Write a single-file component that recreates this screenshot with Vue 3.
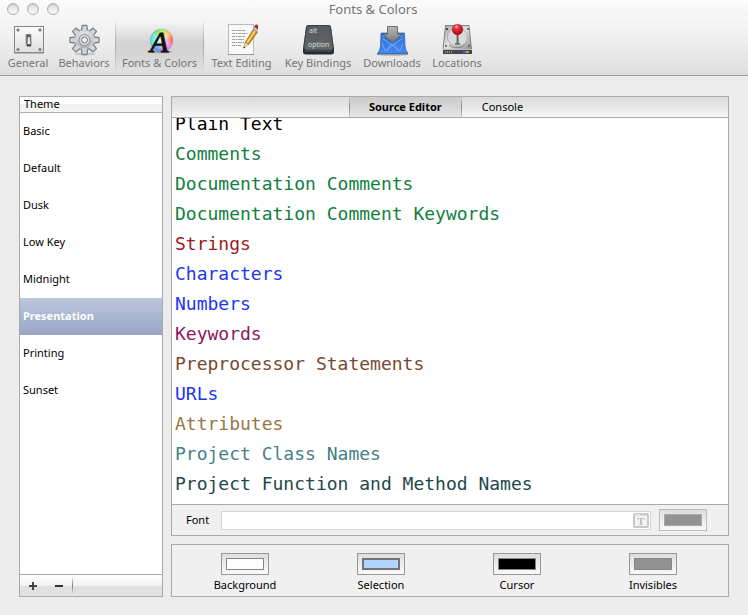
<script setup>
import { ref } from 'vue'

const sections = ['General', 'Behaviors', 'Fonts & Colors', 'Text Editing', 'Key Bindings', 'Downloads', 'Locations']
const activeSection = ref('Fonts & Colors')

const themes = ['Basic', 'Default', 'Dusk', 'Low Key', 'Midnight', 'Presentation', 'Printing', 'Sunset']
const activeTheme = ref('Presentation')

const tabs = ['Source Editor', 'Console']
const activeTab = ref('Source Editor')

const syntax = [
  { name: 'Plain Text', color: '#000000' },
  { name: 'Comments', color: '#11803d' },
  { name: 'Documentation Comments', color: '#11803d' },
  { name: 'Documentation Comment Keywords', color: '#11803d' },
  { name: 'Strings', color: '#9c1a1c' },
  { name: 'Characters', color: '#1b35f5' },
  { name: 'Numbers', color: '#1b35f5' },
  { name: 'Keywords', color: '#8f1660' },
  { name: 'Preprocessor Statements', color: '#78492e' },
  { name: 'URLs', color: '#1b35f5' },
  { name: 'Attributes', color: '#957843' },
  { name: 'Project Class Names', color: '#458186' },
  { name: 'Project Function and Method Names', color: '#22474a' },
]

const fontName = ref('')
const fontColor = ref('#929292')
const wells = ref([
  { name: 'Background', value: '#ffffff' },
  { name: 'Selection', value: '#b2d3ff' },
  { name: 'Cursor', value: '#000000' },
  { name: 'Invisibles', value: '#929292' },
])
const teeth = [0, 45, 90, 135, 180, 225, 270, 315]
</script>

<template>
  <div class="window">
    <header class="chrome">
      <div class="titlebar">
        <div class="lights">
          <button class="light" aria-label="Close"></button>
          <button class="light" aria-label="Minimize"></button>
          <button class="light" aria-label="Zoom"></button>
        </div>
        <h1 class="title">Fonts &amp; Colors</h1>
      </div>
      <nav class="toolbar">
        <button
          v-for="s in sections"
          :key="s"
          class="tool"
          :class="{ active: s === activeSection }"
          @click="activeSection = s"
        >
          <svg v-if="s === 'General'" class="icon" viewBox="0 0 32 32">
            <defs>
              <linearGradient id="plate" x1="0" y1="0" x2="0" y2="1">
                <stop offset="0" stop-color="#fbfbf9" /><stop offset="1" stop-color="#dfe0de" />
              </linearGradient>
            </defs>
            <rect x="2" y="3" width="30" height="27" fill="#777" opacity=".4" />
            <rect x="2.500" y="2.500" width="29" height="26" fill="url(#plate)" stroke="#858585" />
            <g fill="#8b8b8b" stroke="#666" stroke-width=".5">
              <circle cx="6" cy="6" r="1.300" /><circle cx="28" cy="6" r="1.300" />
              <circle cx="6" cy="25.500" r="1.300" /><circle cx="28" cy="25.500" r="1.300" />
            </g>
            <rect x="13.500" y="10" width="6" height="12" fill="#aaa" />
            <path d="M14.500 10.500h4v9h-4z" fill="#555" />
            <path d="M15.500 12.500h2.500l1 8h-4z" fill="#e9e9e9" stroke="#555" stroke-width=".7" />
            <path d="M15 20.500h4v2h-4z" fill="#4b4b4b" />
          </svg>

          <svg v-else-if="s === 'Behaviors'" class="icon" viewBox="0 0 32 32">
            <defs>
              <linearGradient id="gear" x1="0" y1="0" x2="0" y2="1">
                <stop offset="0" stop-color="#e6e8ec" /><stop offset="1" stop-color="#a5a9ae" />
              </linearGradient>
            </defs>
            <ellipse cx="17" cy="30" rx="11" ry="1.500" fill="#000" opacity=".14" />
            <g stroke="#7c8086" stroke-width="1.400" stroke-linejoin="round" fill="#c9ccd1">
              <path v-for="t in teeth" :key="t" d="M13.400 7L14.200 1.500h4.600L19.600 7z" :transform="`rotate(${t} 16.500 16)`" />
            </g>
            <circle cx="16.500" cy="16" r="10.300" fill="url(#gear)" stroke="#898d92" stroke-width=".7" />
            <g fill="#d0d3d7">
              <path v-for="t in teeth" :key="t" d="M14.200 8L14.800 2.200h3.400L18.800 8z" :transform="`rotate(${t} 16.500 16)`" />
            </g>
            <circle cx="16.500" cy="16" r="5.500" fill="#d9dcdf" stroke="#8b8f94" />
            <circle cx="16.500" cy="16" r="3" fill="#eff0f1" stroke="#777b80" />
          </svg>

          <svg v-else-if="s === 'Fonts & Colors'" class="icon" viewBox="0 0 32 32">
            <defs>
              <radialGradient id="wheelCenter">
                <stop offset="0" stop-color="#fff" stop-opacity=".9" /><stop offset="1" stop-color="#fff" stop-opacity="0" />
              </radialGradient>
              <clipPath id="disc"><circle cx="17.500" cy="16.500" r="11.500" /></clipPath>
              <filter id="soften"><feGaussianBlur stdDeviation="1.600" /></filter>
            </defs>
            <ellipse cx="17" cy="28" rx="11" ry="1.300" fill="#000" opacity=".25" />
            <g clip-path="url(#disc)">
              <g filter="url(#soften)">
                <path d="M17.500 17L4 4H17z" fill="#5fe68b" />
                <path d="M17.500 17L14 2h12z" fill="#b8ec66" />
                <path d="M17.500 17L25 2l8 10z" fill="#ffc070" />
                <path d="M17.500 17L32 9v13z" fill="#ff7678" />
                <path d="M17.500 17L32 20l-8 12z" fill="#f783d3" />
                <path d="M17.500 17L27 32H12z" fill="#c07fea" />
                <path d="M17.500 17L16 32 3 25z" fill="#6494f0" />
                <path d="M17.500 17L2 26V4z" fill="#5fe2df" />
              </g>
              <circle cx="17.500" cy="16.500" r="10" fill="url(#wheelCenter)" />
            </g>
            <circle cx="17.500" cy="16.500" r="11.300" fill="none" stroke="#777" stroke-width=".5" opacity=".6" />
            <text x="6" y="28" class="letter-a">A</text>
          </svg>

          <svg v-else-if="s === 'Text Editing'" class="icon" viewBox="0 0 32 32">
            <rect x="2.500" y=".5" width="25" height="30" fill="#f9f9f9" stroke="#bbb" />
            <path d="M2 30.500h26" stroke="#999" />
            <g stroke="#888" stroke-width=".8" stroke-dasharray="3 .6 1.500 .6 4 .6">
              <path d="M6 6.500h14M6 9.500h16M6 12.500h13M6 15.500h12M6 18.500h12M6 21.500h9" />
            </g>
            <path d="M17.500 24l2-6 8-13 4 3-8.500 12z" fill="#d68a1c" stroke="#765022" stroke-width=".6" />
            <path d="M20.500 18l8-12 1.500 1-8 12z" fill="#ffd865" />
            <path d="M17.500 24l1.700-5 3.300 2z" fill="#efd6ab" />
            <path d="M17.500 24.500l.7-2 1.200.8z" fill="#222" />
            <path d="M27 5l1.500-2.300 3.500 2.600-1.500 2.300z" fill="#bfc3c7" stroke="#777" stroke-width=".4" />
            <path d="M28.300 2.700c.8-1.800 1.700-2.700 3-2 1.500.8 1.300 3 .5 4.500z" fill="#b82227" />
          </svg>

          <svg v-else-if="s === 'Key Bindings'" class="icon" viewBox="0 0 32 32">
            <defs>
              <linearGradient id="key" x1="0" y1="0" x2="0" y2="1">
                <stop offset="0" stop-color="#555a5d" /><stop offset="1" stop-color="#626769" />
              </linearGradient>
            </defs>
            <path d="M4 3q.3-2 2.500-2h20q2.200 0 2.500 2l3 22v3q0 2.500-3 2.500H4q-3 0-3-2.500v-3z" fill="#292c2e" />
            <path d="M4.500 3.500q.2-2 2-2h20q1.800 0 2 2l2.500 19q.3 3.500-2.500 3.500h-24Q1.700 26 2 22.500z" fill="url(#key)" stroke="#3d4042" stroke-width=".7" />
            <path d="M3 27h27" stroke="#777b7d" stroke-width=".6" />
            <text x="7" y="9" class="key-text">alt</text>
            <text x="6" y="23" class="key-text">option</text>
          </svg>

          <svg v-else-if="s === 'Downloads'" class="icon" viewBox="0 0 32 32">
            <defs>
              <linearGradient id="arrow" x1="0" y1="0" x2="0" y2="1">
                <stop offset="0" stop-color="#c0c0c0" /><stop offset="1" stop-color="#727272" />
              </linearGradient>
              <linearGradient id="blue" x1="0" y1="0" x2="0" y2="1">
                <stop offset="0" stop-color="#2f73d5" /><stop offset="1" stop-color="#3f88f2" />
              </linearGradient>
            </defs>
            <path d="M1 29h31v2q-15 1-31 0z" fill="#777" opacity=".7" />
            <path d="M5 9h23.500l.5 13q.5 5 3 7.500H1.500q2.500-2.500 3-7.500z" fill="url(#blue)" stroke="#2860b4" stroke-width=".7" />
            <g fill="none" stroke="#79b0fb" stroke-width=".8">
              <path d="M6 12h21M6 14l18 13M27 14L9 27M11 27l4-7h3l4 7M6 19l3 8M27 19l-3 8" />
            </g>
            <path d="M11.500 2.500h10V10h4.500l-9.500 9L7 10h4.500z" fill="url(#arrow)" stroke="#555" stroke-width=".8" />
            <path d="M12 4h9M12 6h9M12 8h9" stroke="#999" stroke-width=".5" />
          </svg>

          <svg v-else class="icon" viewBox="0 0 32 32">
            <defs>
              <linearGradient id="drive" x1="0" y1="0" x2="1" y2="1">
                <stop offset="0" stop-color="#a8a8a8" /><stop offset=".5" stop-color="#e2e2e2" /><stop offset="1" stop-color="#8e8e8e" />
              </linearGradient>
              <radialGradient id="pin" cx=".4" cy=".25" r=".7">
                <stop offset="0" stop-color="#ffb8b8" /><stop offset=".3" stop-color="#ef343a" /><stop offset="1" stop-color="#b10813" />
              </radialGradient>
            </defs>
            <path d="M4.500 1.500h23.500l2.500 24H2z" fill="url(#drive)" stroke="#6b6b6b" stroke-width=".8" />
            <rect x="2" y="25" width="29" height="5" fill="#44474a" />
            <path d="M2 25.500h29" stroke="#ddd" stroke-width=".8" />
            <path d="M4 28h8" stroke="#aaa" stroke-width="1.500" stroke-dasharray="1 1" />
            <rect x="22" y="27" width="3" height="2" fill="#3b6fd0" /><rect x="25.500" y="27" width="2" height="2" fill="#e3bd3d" />
            <ellipse cx="16.500" cy="13" rx="10" ry="9.500" fill="#dadada" stroke="#999" stroke-width=".6" />
            <path d="M8 21q4 4 13 2l3-3" fill="none" stroke="#888" />
            <circle cx="6" cy="5" r="1" fill="#222" /><circle cx="27" cy="5" r="1" fill="#444" />
            <circle cx="5" cy="22" r="1" fill="#555" /><circle cx="28" cy="22" r="1" fill="#555" />
            <ellipse cx="16.500" cy="20" rx="3" ry="1.300" fill="#888" />
            <path d="M16.500 10v10" stroke="#3d3d3d" stroke-width="1.800" />
            <path d="M16 10v10" stroke="#ccc" stroke-width=".5" />
            <circle cx="16.500" cy="5.500" r="5.300" fill="url(#pin)" stroke="#94111a" stroke-width=".5" />
          </svg>
          <span>{{ s }}</span>
        </button>
      </nav>
    </header>

    <main class="content">
      <section class="panel themes">
        <h2 class="themes-head">Theme</h2>
        <ul class="theme-list">
          <li v-for="t in themes" :key="t">
            <button class="theme" :class="{ active: t === activeTheme }" @click="activeTheme = t">{{ t }}</button>
          </li>
        </ul>
        <footer class="themes-foot">
          <button class="foot-button" aria-label="Add theme">
            <svg viewBox="0 0 8 8"><path d="M4 0v8M0 4h8" stroke="#444" stroke-width="2" /></svg>
          </button>
          <button class="foot-button" aria-label="Remove theme">
            <svg viewBox="0 0 8 8"><path d="M0 4h8" stroke="#333" stroke-width="2" /></svg>
          </button>
          <i class="foot-divider"></i>
        </footer>
      </section>

      <div class="right">
        <section class="panel editor">
          <div class="tabs" role="tablist">
            <button
              v-for="t in tabs"
              :key="t"
              class="tab"
              role="tab"
              :aria-selected="t === activeTab"
              :class="{ active: t === activeTab }"
              @click="activeTab = t"
            >{{ t }}</button>
          </div>
          <ul class="syntax">
            <li v-for="r in syntax" :key="r.name" :style="{ color: r.color }">{{ r.name }}</li>
          </ul>
          <div class="font-bar">
            <label for="font-name">Font</label>
            <div class="font-field">
              <input id="font-name" v-model="fontName" type="text" />
              <button class="font-picker" aria-label="Choose font">
                <svg viewBox="0 0 16 15">
                  <rect x="1" y="1" width="14" height="13" rx="1" fill="#f4f4f4" stroke="#c8c8c8" stroke-width="2" />
                  <path d="M1 1.500h14" stroke="#c8c8c8" stroke-width="2" />
                  <path d="M2 1.500h5" stroke="#fff" stroke-dasharray="1 1" />
                  <text x="8" y="12" text-anchor="middle" class="letter-t">T</text>
                </svg>
              </button>
            </div>
            <input v-model="fontColor" class="well dim" type="color" aria-label="Font color" />
          </div>
        </section>

        <section class="panel wells">
          <label v-for="w in wells" :key="w.name" class="well-item">
            <input v-model="w.value" class="well" :class="{ heavy: w.name === 'Selection' }" type="color" />
            <span>{{ w.name }}</span>
          </label>
        </section>
      </div>
    </main>
  </div>
</template>

<style>
body {
  margin: 0;
}
</style>

<style scoped>
* {
  box-sizing: border-box;
}
.window {
  display: flex;
  flex-direction: column;
  height: 100vh;
  background: #ececec;
  color: #000;
  font: 11px/14px "Noto Sans", "Open Sans", sans-serif;
}
button,
input {
  margin: 0;
  padding: 0;
  border: 0;
  background: none;
  color: inherit;
  font: inherit;
}
h1, h2, ul {
  margin: 0;
  padding: 0;
  list-style: none;
}
.chrome {
  height: 76px;
  flex: none;
  border-bottom: 1px solid #9c9c9c;
  background: linear-gradient(#fbfbfb, #f0f0f0 50%, #dedede);
  color: #757575;
}
.titlebar {
  display: grid;
  grid-template-columns: 1fr auto 1fr;
  align-items: center;
  height: 18px;
  padding: 0 9px 0 7px;
}
.lights {
  display: flex;
  gap: 8px;
}
.light {
  width: 12px;
  height: 12px;
  border: 1px solid #b0b0b0;
  border-radius: 50%;
  background: linear-gradient(#dedede, #fafafa);
  box-shadow: inset 0 1px 1px #c4c4c4;
}
.title {
  font-size: 13px;
  font-weight: 400;
  line-height: 18px;
}
.toolbar {
  display: grid;
  grid-template-columns: 50px 62px 89px 75px 78px 70px 60px;
  height: 54px;
  padding: 0 3px;
}
.tool {
  display: flex;
  flex-direction: column;
  align-items: center;
  padding: 6px 0 0;
  line-height: 14px;
  white-space: nowrap;
}
.tool.active {
  background:
    linear-gradient(transparent, #aaa 50%, transparent) left / 1px 100% no-repeat,
    linear-gradient(transparent, #aaa 50%, transparent) right / 1px 100% no-repeat,
    linear-gradient(transparent 5%, rgba(0, 0, 0, .11) 45%, rgba(0, 0, 0, .09) 65%, transparent);
}
.icon {
  width: 32px;
  height: 32px;
  flex: none;
}
.letter-a {
  font: italic 30px "Liberation Serif", serif;
  fill: #111;
  stroke: #111;
  stroke-width: 1px;
}
.key-text {
  font: 7px "Noto Sans", sans-serif;
  fill: #ddd;
}
.letter-t {
  font: bold 11px "Liberation Serif", serif;
  fill: #bbb;
}
.content {
  display: flex;
  flex: 1;
  gap: 8px;
  min-height: 0;
  padding: 20px 19px 18px;
}
.panel {
  border: 1px solid #aaa;
}
.themes {
  display: flex;
  flex-direction: column;
  width: 144px;
  flex: none;
  background: #fff;
}
.themes-head {
  height: 16px;
  padding-left: 4px;
  border-bottom: 1px solid #b0b0b0;
  background: linear-gradient(#fff 45%, #efefef 50%, #f5f5f5);
  font-size: 11px;
  font-weight: 400;
  line-height: 14px;
}
.theme-list {
  flex: 1;
}
.theme {
  display: block;
  width: 100%;
  height: 37px;
  padding: 0 3px 2px;
  text-align: left;
}
.theme.active {
  background: linear-gradient(#bac6dc, #98a6c5);
  color: #fff;
  font-weight: 700;
}
.themes-foot {
  display: flex;
  align-items: center;
  height: 22px;
  flex: none;
  border-top: 1px solid #aaa;
  background: linear-gradient(#fff, #f1f1f1 50%, #dfdfdf 52%, #e3e3e3);
}
.foot-button {
  width: 26px;
  height: 20px;
}
.foot-button svg {
  display: block;
  width: 8px;
  height: 8px;
  margin: 0 auto;
}
.foot-divider {
  width: 1px;
  height: 15px;
  background: linear-gradient(#ddd, #808080 50%, #ccc);
}
.right {
  display: flex;
  flex: 1;
  flex-direction: column;
  gap: 8px;
  min-width: 0;
}
.editor {
  display: flex;
  flex: 1;
  flex-direction: column;
  min-height: 0;
}
.tabs {
  display: flex;
  justify-content: center;
  height: 21px;
  flex: none;
  padding-right: 8px;
  border-bottom: 1px solid #aaa;
  background: linear-gradient(#dadada, #f6f6f6);
}
.tab {
  padding: 0 20px;
}
.tab.active {
  background:
    linear-gradient(#ccc, #888 50%, #ccc) left / 1px 100% no-repeat,
    linear-gradient(#ccc, #888 50%, #ccc) right / 1px 100% no-repeat,
    linear-gradient(#c9c9c9, #e6e6e6);
  font-weight: 700;
}
.syntax {
  display: flex;
  flex: 1;
  flex-direction: column;
  justify-content: flex-end;
  min-height: 0;
  padding: 0 3px 5px;
  overflow: hidden;
  background: #fff;
  font: 18px/30px "DejaVu Sans Mono", monospace;
  white-space: nowrap;
}
.font-bar {
  display: flex;
  align-items: center;
  height: 31px;
  flex: none;
  padding: 0 21px 0 14px;
  border-top: 1px solid #aaa;
  background: #f0f0f0;
}
.font-bar label {
  width: 35px;
}
.font-field {
  display: flex;
  flex: 1;
  align-items: center;
  height: 19px;
  margin-right: 8px;
  border: 1px solid #d4d4d4;
  background: #fff;
}
.font-field input {
  flex: 1;
  min-width: 0;
  height: 17px;
  padding: 0 4px;
}
.font-picker {
  width: 17px;
  height: 15px;
}
.font-picker svg {
  display: block;
  width: 16px;
  height: 15px;
}
.wells {
  display: grid;
  grid-template-columns: repeat(4, 1fr);
  height: 53px;
  flex: none;
  padding: 8px 7px 0 5px;
  background: #f0f0f0;
}
.well-item {
  display: flex;
  flex-direction: column;
  align-items: center;
  gap: 3px;
}
.well {
  appearance: none;
  width: 48px;
  height: 22px;
  padding: 4px;
  border: 1px solid #979797;
  background: linear-gradient(#dedede, #fafafa);
}
.well.dim {
  border-color: #bcbcbc;
}
.well::-webkit-color-swatch-wrapper {
  padding: 0;
}
.well::-webkit-color-swatch {
  border: 1px solid #858585;
  border-radius: 0;
}
.well.dim::-webkit-color-swatch {
  border-color: #aaa;
}
.well.heavy::-webkit-color-swatch {
  border: 2px solid #707378;
}
</style>
